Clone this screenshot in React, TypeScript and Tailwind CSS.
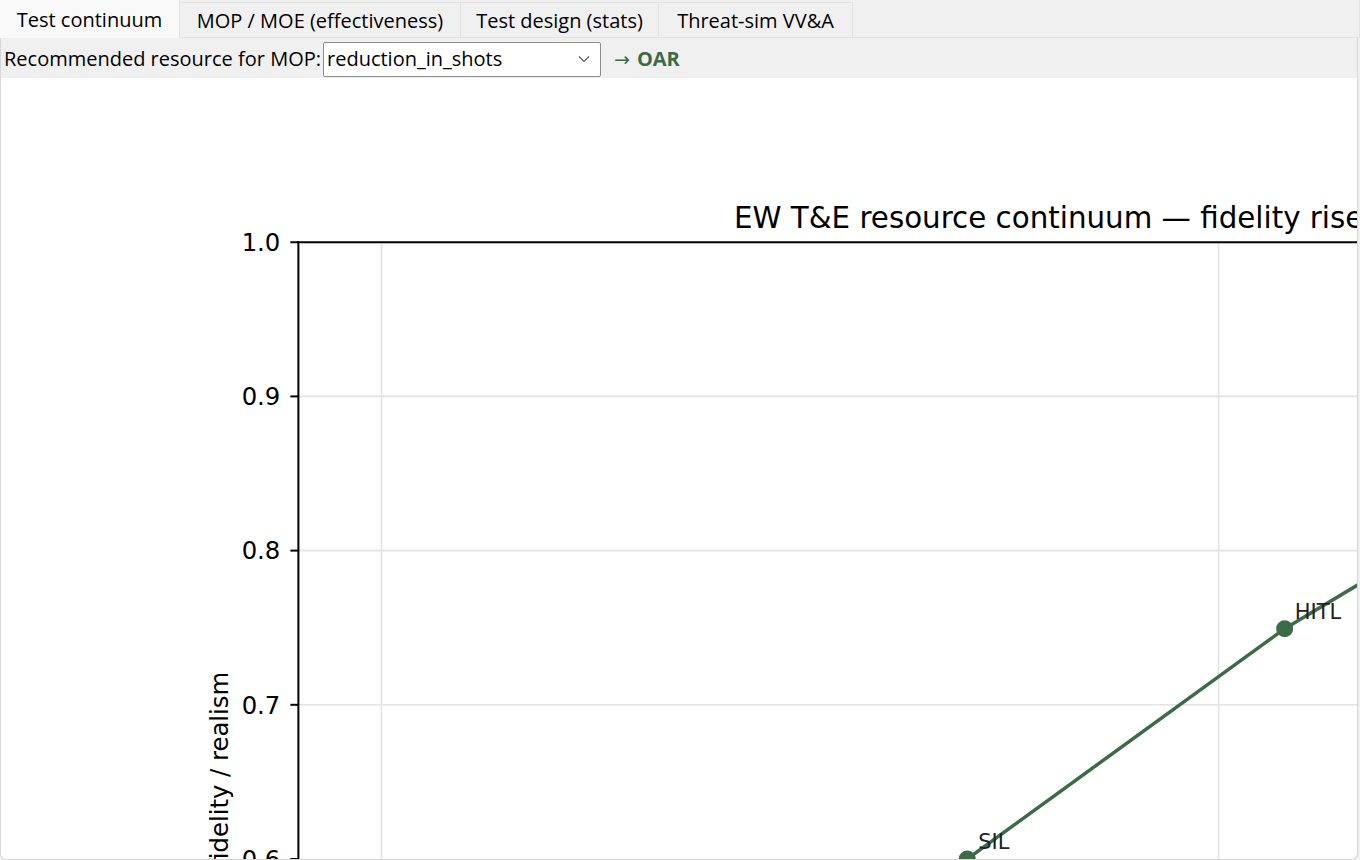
import React from 'react';

const GREEN = '#3b6b47';

const tabs = [
  { label: 'Test continuum', w: 'w-[180px]', active: true },
  { label: 'MOP / MOE (effectiveness)', w: 'w-[281px]', active: false },
  { label: 'Test design (stats)', w: 'w-[198px]', active: false },
  { label: 'Threat-sim VV&A', w: 'w-[194px]', active: false },
];

// y position for a fidelity value (page coords)
const fy = (v: number) => 242 + (1 - v) * 1540;

const Chart = () => {
  const yTicks = [1.0, 0.9, 0.8, 0.7, 0.6];
  return (
    <svg
      className="block w-full h-full"
      viewBox="1 78 1356 780"
      preserveAspectRatio="xMinYMin slice"
      style={{ fontFamily: '"DejaVu Sans", sans-serif' }}
    >
      {/* grid */}
      {[0.9, 0.8, 0.7].map((v) => (
        <line key={v} x1={298} x2={1360} y1={fy(v)} y2={fy(v)} stroke="#e3e3e3" strokeWidth={1.6} />
      ))}
      {[381, 1217].map((x) => (
        <line key={x} x1={x} x2={x} y1={242} y2={900} stroke="#e3e3e3" strokeWidth={1.6} />
      ))}

      {/* spines */}
      <line x1={298} x2={298} y1={241} y2={900} stroke="#000" strokeWidth={2} />
      <line x1={297} x2={1360} y1={242} y2={242} stroke="#000" strokeWidth={2} />

      {/* y ticks */}
      {yTicks.map((v) => (
        <g key={v}>
          <line x1={290} x2={298} y1={fy(v)} y2={fy(v)} stroke="#000" strokeWidth={2} />
          <text x={280} y={fy(v) + 8.8} textAnchor="end" fontSize={24.3} fill="#000">
            {v.toFixed(1)}
          </text>
        </g>
      ))}

      {/* y label */}
      <text transform="translate(228,671) rotate(-90)" textAnchor="end" fontSize={24.3} fill="#000">
        fidelity / realism
      </text>

      {/* title */}
      <text x={733} y={228} fontSize={29.3} fill="#000">
        EW T&amp;E resource continuum — fidelity rises with cost
      </text>

      {/* data line */}
      <polyline
        points="800,1094 966,858 1283,628 1400,558"
        fill="none"
        stroke={GREEN}
        strokeWidth={3.5}
      />
      <circle cx={966} cy={858} r={8.5} fill={GREEN} />
      <circle cx={1283} cy={628} r={8.5} fill={GREEN} />
      <text x={977} y={848} fontSize={21} fill="#222">SIL</text>
      <text x={1293} y={618} fontSize={21} fill="#222">HITL</text>
    </svg>
  );
};

export default function App() {
  return (
    <div
      className="w-[1360px] h-[860px] bg-[#f0f0f0] flex flex-col overflow-hidden text-black"
      style={{ fontFamily: '"Open Sans", "Noto Sans", sans-serif' }}
    >
      {/* tab strip */}
      <div className="flex h-[38px] shrink-0">
        {tabs.map((t) =>
          t.active ? (
            <div
              key={t.label}
              className={`${t.w} h-[38px] bg-[#f9f9f9] border-r border-[#e0e0e0] flex items-center justify-center text-[20px] pt-[1px]`}
            >
              {t.label}
            </div>
          ) : (
            <div
              key={t.label}
              className={`${t.w} mt-[2px] h-[36px] bg-[#f0f0f0] border-t border-r border-b border-[#e3e3e3] flex items-center justify-center text-[20px] pt-[2px]`}
            >
              {t.label}
            </div>
          )
        )}
        <div className="w-[507px] h-[38px] border-b border-r border-[#e3e3e3]" />
      </div>

      {/* pane */}
      <div className="w-[1358px] flex-1 flex flex-col border-r border-l border-b border-[#d6d6d6] rounded-b-[7px] min-h-0">
        {/* toolbar */}
        <div className="h-[40px] shrink-0 flex items-center pl-[3px] pt-[2px] text-[20px]">
          <span>Recommended resource for MOP:</span>
          <div className="ml-[2px] w-[278px] h-[35px] bg-white border border-[#8c8c8c] rounded-[2px] flex items-center pl-[3px] pr-[10px]">
            <span className="flex-1">reduction_in_shots</span>
            <svg width="12" height="8" viewBox="0 0 12 8">
              <path d="M1 1.5 L6 6.5 L11 1.5" fill="none" stroke="#555" strokeWidth="1.1" />
            </svg>
          </div>
          <span className="ml-[13px] text-[#3b6b47] flex items-center gap-[7px]">
            <span className="text-[19px]" style={{ fontFamily: '"DejaVu Sans", sans-serif' }}>→</span>
            <span className="font-bold">OAR</span>
          </span>
        </div>

        {/* figure canvas */}
        <div className="flex-1 bg-white rounded-b-[6px] overflow-hidden min-h-0">
          <Chart />
        </div>
      </div>
    </div>
  );
}
